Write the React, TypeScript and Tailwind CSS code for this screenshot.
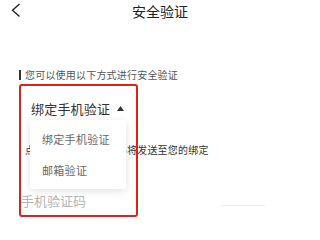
const font = { fontFamily: '"Noto Sans CJK SC", "Noto Sans", sans-serif' }

export default function App() {
  return (
    <div className="relative w-[320px] h-[240px] overflow-hidden bg-white" style={font}>
      {/* header */}
      <div className="relative h-[22px] flex items-center justify-center">
        <svg width="24" height="22" viewBox="0 0 24 22" className="absolute left-0 top-0">
          <path d="M19.5 4 L12.5 10.2 L19.5 16.4" fill="none" stroke="#222" strokeWidth="1.4" />
        </svg>
        <span className="text-[14px] leading-[22px] text-[#222]">安全验证</span>
      </div>

      {/* tip */}
      <div className="mt-[47px] pl-[19px] flex items-center gap-[4px] h-[12px]">
        <span className="w-[2px] h-[10px] bg-[#333]" />
        <span className="text-[10px] leading-[12px] text-[#555] tracking-[0.2px]">您可以使用以下方式进行安全验证</span>
      </div>

      {/* selector */}
      <div className="mt-[19px] pl-[31px] flex items-center gap-[7px] h-[18px]">
        <span className="text-[13px] leading-[18px] text-[#333] tracking-[0.2px]">绑定手机验证</span>
        <svg width="7" height="5" viewBox="0 0 7 5" className="mt-[-1px]">
          <path d="M3.5 0 L7 5 L0 5 Z" fill="#333" />
        </svg>
      </div>

      {/* hint */}
      <div className="mt-[25px] pl-[25px] h-[14px] flex items-center whitespace-nowrap">
        <span className="text-[10px] leading-[14px] text-[#333] tracking-[0.2px]">点击获取，短信验证码将发送至您的绑定</span>
      </div>

      {/* input */}
      <div className="mt-[36px] pl-[21px] flex items-center h-[16px]">
        <span className="text-[13px] leading-[16px] text-[#b5b5b5]">手机验证码</span>
        <span className="ml-[135px] mt-[8px] w-[44px] h-[1px] bg-[#ececec]" />
      </div>

      {/* dropdown popup */}
      <div className="absolute left-[30px] top-[120px] w-[96px] h-[69px] bg-white rounded-[3px] shadow-[0_2px_8px_rgba(0,0,0,0.12)] flex flex-col justify-around py-[4px] pl-[12px]">
        <span className="text-[11px] leading-[14px] text-[#666] tracking-[0.3px]">绑定手机验证</span>
        <span className="text-[11px] leading-[14px] text-[#666] tracking-[0.3px]">邮箱验证</span>
      </div>

      {/* red annotation */}
      <div className="absolute left-[19px] top-[84px] w-[119px] h-[133px] border-2 border-[#e0201e] rounded-[3px]" />
    </div>
  )
}
